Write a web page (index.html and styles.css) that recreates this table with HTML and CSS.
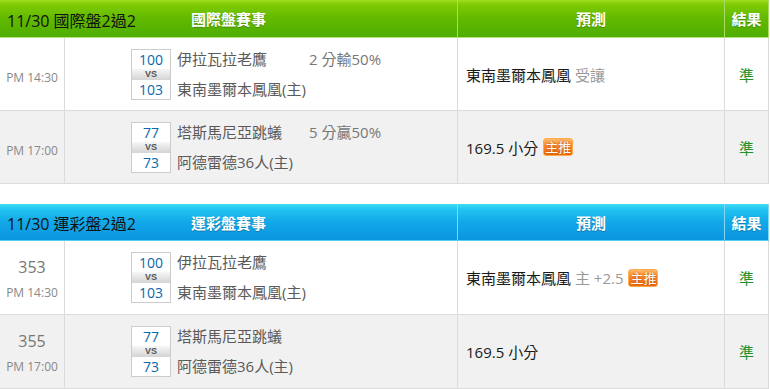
FILE: index.html
```html
<!DOCTYPE html>
<html lang="zh-Hant">
<head>
<meta charset="utf-8">
<title>2過2</title>
<link rel="stylesheet" href="styles.css">
</head>
<body>
<section class="board board-green">
  <div class="head">
    <div class="head-main">
      <div class="head-title">11/30 國際盤2過2</div>
      <div class="head-label">國際盤賽事</div>
      <div></div>
    </div>
    <div class="head-cell">預測</div>
    <div class="head-cell">結果</div>
  </div>
  <div class="row">
    <div class="c-time"><span class="time">PM 14:30</span></div>
    <div class="c-match">
      <div class="match">
        <div class="score-box"><div class="num">100</div><div class="vs">VS</div><div class="num">103</div></div>
        <div class="teams"><span>伊拉瓦拉老鷹</span><span>東南墨爾本鳳凰(主)</span></div>
        <div class="line">2 分輸50%</div>
      </div>
    </div>
    <div class="c-pred">東南墨爾本鳳凰&nbsp;<span class="muted">受讓</span></div>
    <div class="c-res">準</div>
  </div>
  <div class="row row-alt">
    <div class="c-time"><span class="time">PM 17:00</span></div>
    <div class="c-match">
      <div class="match">
        <div class="score-box"><div class="num">77</div><div class="vs">VS</div><div class="num">73</div></div>
        <div class="teams"><span>塔斯馬尼亞跳蟻</span><span>阿德雷德36人(主)</span></div>
        <div class="line">5 分贏50%</div>
      </div>
    </div>
    <div class="c-pred">169.5 小分<span class="badge">主推</span></div>
    <div class="c-res">準</div>
  </div>
</section>

<section class="board board-blue">
  <div class="head">
    <div class="head-main">
      <div class="head-title">11/30 運彩盤2過2</div>
      <div class="head-label">運彩盤賽事</div>
      <div></div>
    </div>
    <div class="head-cell">預測</div>
    <div class="head-cell">結果</div>
  </div>
  <div class="row">
    <div class="c-time c-time-two"><span class="code">353</span><span class="time">PM 14:30</span></div>
    <div class="c-match">
      <div class="match">
        <div class="score-box"><div class="num">100</div><div class="vs">VS</div><div class="num">103</div></div>
        <div class="teams"><span>伊拉瓦拉老鷹</span><span>東南墨爾本鳳凰(主)</span></div>
        <div class="line"></div>
      </div>
    </div>
    <div class="c-pred">東南墨爾本鳳凰&nbsp;<span class="muted">主 +2.5</span><span class="badge">主推</span></div>
    <div class="c-res">準</div>
  </div>
  <div class="row row-alt">
    <div class="c-time c-time-two"><span class="code">355</span><span class="time">PM 17:00</span></div>
    <div class="c-match">
      <div class="match">
        <div class="score-box"><div class="num">77</div><div class="vs">VS</div><div class="num">73</div></div>
        <div class="teams"><span>塔斯馬尼亞跳蟻</span><span>阿德雷德36人(主)</span></div>
        <div class="line"></div>
      </div>
    </div>
    <div class="c-pred">169.5 小分</div>
    <div class="c-res">準</div>
  </div>
</section>
</body>
</html>
```

FILE: styles.css
```css
* { box-sizing: border-box; }

html, body {
  margin: 0;
  padding: 0;
  background: #fff;
}

body {
  font-family: "Open Sans", "Noto Sans CJK TC", sans-serif;
  color: #222;
  width: 770px;
}

.board {
  width: 769px;
}

.board-blue {
  margin-top: 20px;
}

/* header */
.head {
  display: grid;
  grid-template-columns: 458px 267px 44px;
  height: 38px;
  border-bottom: 1px solid #b3e27a;
  background: linear-gradient(#a2dd1e 0, #7fcb04 12%, #62b900 50%, #4fae00 100%);
}

.board-blue .head {
  height: 37px;
  border-bottom-color: #5ccbf0;
  background: linear-gradient(#3ddcf6 0, #22c3f0 15%, #12a8e8 50%, #0b95e0 100%);
}

.head-main {
  display: grid;
  grid-template-columns: 1fr auto 1fr;
  align-items: center;
  border-right: 1px solid #a9dc62;
}

.head-cell {
  display: flex;
  align-items: center;
  justify-content: center;
  border-right: 1px solid #a9dc62;
  color: #fff;
  font-weight: bold;
  font-size: 15px;
  text-shadow: 0 1px 1px rgba(0, 0, 0, 0.25);
}

.board-blue .head-main,
.board-blue .head-cell {
  border-right-color: #7fd8f4;
}

.head-title {
  padding-left: 7px;
  padding-top: 2px;
  font-size: 16px;
  color: #111;
  white-space: nowrap;
}

.head-label {
  color: #fff;
  font-weight: bold;
  font-size: 15px;
  text-shadow: 0 1px 1px rgba(0, 0, 0, 0.25);
}

/* rows */
.row {
  display: grid;
  grid-template-columns: 65px 393px 267px 44px;
  height: 73px;
  background: #fff;
}

.board-blue .row {
  height: 74px;
}

.row-alt {
  background: #f1f1f1;
}

.row > div {
  border-right: 1px solid #dcdcdc;
  border-bottom: 1px solid #dcdcdc;
}

.c-time {
  display: flex;
  flex-direction: column;
  align-items: center;
  justify-content: center;
  padding-top: 7px;
}

.c-time-two {
  padding-top: 5px;
}

.time {
  font-size: 12px;
  color: #888;
  line-height: 26px;
}

.code {
  font-size: 16px;
  color: #777;
  line-height: 26px;
}

.c-match {
  display: flex;
  align-items: center;
  padding-left: 66px;
}

.match {
  display: grid;
  grid-template-columns: 40px 138px auto;
  align-items: start;
}

.score-box {
  width: 40px;
  border: 1px solid #cccccc;
  background: #fff;
}

.num {
  height: 19px;
  line-height: 19px;
  text-align: center;
  font-size: 14px;
  color: #0a68ad;
}

.vs {
  height: 11px;
  line-height: 11px;
  text-align: center;
  font-family: "Liberation Sans", sans-serif;
  font-size: 9px;
  font-weight: bold;
  color: #555;
  background: linear-gradient(#f6f6f6, #d4d4d4);
}

.teams {
  display: flex;
  flex-direction: column;
  justify-content: space-between;
  height: 51px;
  padding-left: 6px;
  font-size: 15px;
  line-height: 21px;
  color: #5a5a5a;
  white-space: nowrap;
}

.line {
  font-size: 15px;
  line-height: 21px;
  color: #777;
  white-space: nowrap;
}

.c-pred {
  display: flex;
  align-items: center;
  padding-left: 8px;
  font-size: 15px;
  color: #1a1a1a;
  white-space: nowrap;
}

.muted {
  color: #999;
}

.badge {
  display: inline-block;
  margin-left: 5px;
  width: 30px;
  height: 18px;
  line-height: 16px;
  text-align: center;
  font-size: 13px;
  color: #fff;
  border: 1px solid #ffab50;
  border-radius: 3px;
  background: linear-gradient(#ffb865 0, #f8862a 45%, #ef6a05 100%);
  text-shadow: 0 0 2px #a84300;
}

.c-res {
  display: flex;
  align-items: center;
  justify-content: center;
  font-size: 15px;
  color: #23902a;
}
```
